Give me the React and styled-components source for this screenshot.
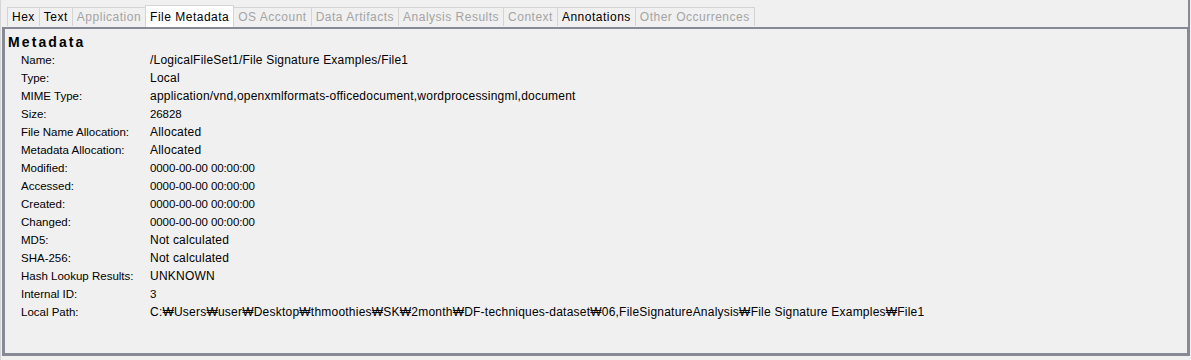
import React from 'react';
import styled, { createGlobalStyle } from 'styled-components';

const GlobalStyle = createGlobalStyle`
    html, body {
        margin: 0;
        padding: 0;
        background: #f0f0f0;
    }
    body {
        font-family: "Liberation Sans", Arial, sans-serif;
        font-size: 12px;
        color: #000;
    }
`

const tabs = [
    { name: 'Hex', enabled: true },
    { name: 'Text', enabled: true },
    { name: 'Application', enabled: false },
    { name: 'File Metadata', enabled: true, active: true },
    { name: 'OS Account', enabled: false },
    { name: 'Data Artifacts', enabled: false },
    { name: 'Analysis Results', enabled: false },
    { name: 'Context', enabled: false },
    { name: 'Annotations', enabled: true },
    { name: 'Other Occurrences', enabled: false },
]

// 숫자 값은 좁게, 글자 값은 넓게
const rows = [
    ['Name:', '/LogicalFileSet1/File Signature Examples/File1'],
    ['Type:', 'Local'],
    ['MIME Type:', 'application/vnd,openxmlformats-officedocument,wordprocessingml,document'],
    ['Size:', '26828', true],
    ['File Name Allocation:', 'Allocated'],
    ['Metadata Allocation:', 'Allocated'],
    ['Modified:', '0000-00-00 00:00:00', true],
    ['Accessed:', '0000-00-00 00:00:00', true],
    ['Created:', '0000-00-00 00:00:00', true],
    ['Changed:', '0000-00-00 00:00:00', true],
    ['MD5:', 'Not calculated'],
    ['SHA-256:', 'Not calculated'],
    ['Hash Lookup Results:', 'UNKNOWN'],
    ['Internal ID:', '3', true],
    ['Local Path:', 'C:\u20a9Users\u20a9user\u20a9Desktop\u20a9thmoothies\u20a9SK\u20a92month\u20a9DF-techniques-dataset\u20a906,FileSignatureAnalysis\u20a9File Signature Examples\u20a9File1'],
]

function App(){
    return(
        <>
            <GlobalStyle />
            <Frame>
                <TabBar>
                    {tabs.map((tab)=>(
                        <Tab key={tab.name} $active={tab.active} $enabled={tab.enabled}>
                            {tab.name}
                        </Tab>
                    ))}
                </TabBar>
                <Panel>
                    <Heading>Metadata</Heading>
                    <Table>
                        {rows.map(([label, value, numeric])=>(
                            <React.Fragment key={label}>
                                <Label>{label}</Label>
                                <Value $numeric={numeric}>{value}</Value>
                            </React.Fragment>
                        ))}
                    </Table>
                </Panel>
            </Frame>
        </>
    )
}

const Frame = styled.div`
    width: 1191px;
    height: 360px;
    box-sizing: border-box;
    padding: 0 1px 0 2px;
    background: #f0f0f0;
    border-left: 1px solid #d6d6d6;
    display: flex;
    flex-direction: column;
`

const TabBar = styled.div`
    display: flex;
    align-items: flex-end;
    height: 27px;
    padding-left: 5px;
    border-right: 2px solid #878a96;
    box-sizing: border-box;
`

const Tab = styled.div`
    height: ${p => p.$active ? '22px' : '19px'};
    box-sizing: border-box;
    padding: 0 4px;
    display: flex;
    align-items: center;
    font-size: 12px;
    letter-spacing: 0.5px;
    color: ${p => p.$enabled ? '#000' : '#a4a4a4'};
    background: ${p => p.$active ? '#ffffff' : '#f0f0f0'};
    border: 1px solid #d4d4d4;
    border-bottom: none;
    margin-left: -1px;
    margin-bottom: ${p => p.$active ? '0' : '1px'};
    white-space: nowrap;
`

const Panel = styled.div`
    flex: none;
    height: 329px;
    box-sizing: border-box;
    border-top: 2px solid #878a96;
    border-left: 3px solid #878a96;
    border-right: 3px solid #878a96;
    border-bottom: 3px solid #878a96;
    margin-left: -1px;
    padding: 5px 0 0 3px;
`

const Heading = styled.div`
    font-size: 14px;
    font-weight: bold;
    letter-spacing: 2.1px;
    line-height: 16px;
    margin-bottom: 1px;
`

const Table = styled.div`
    display: grid;
    grid-template-columns: 129px auto;
    grid-auto-rows: 18px;
    padding-left: 13px;
    align-items: center;
`

const Label = styled.div`
    font-size: 11.5px;
    white-space: nowrap;
`

const Value = styled.div`
    font-size: ${p => p.$numeric ? '11.5px' : '12px'};
    letter-spacing: ${p => p.$numeric ? '-0.1px' : '0.22px'};
    white-space: nowrap;
`

export default App
